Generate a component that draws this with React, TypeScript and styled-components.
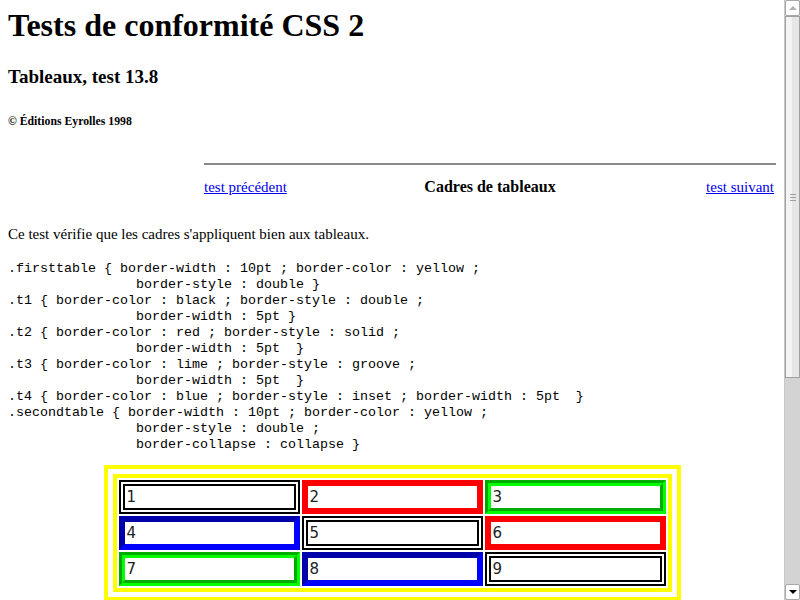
import React from "react";
import styled, { createGlobalStyle } from "styled-components";

const GlobalStyle = createGlobalStyle`
  html, body {
    margin: 0;
    padding: 0;
    overflow: hidden;
    background: #ffffff;
  }
`;

const Screen = styled.div`
  display: flex;
  width: 800px;
  height: 600px;
  overflow: hidden;
`;

const Page = styled.main`
  flex: 1;
  min-width: 0;
  padding: 0 8px;
  overflow: hidden;
  font-family: "Liberation Serif", "Times New Roman", serif;
  color: #000;
`;

const Title = styled.h1`
  margin: 7px 0 0;
  font-size: 32px;
  line-height: 37px;
  font-weight: bold;
`;

const Subtitle = styled.h2`
  margin: 22px 0 0;
  font-size: 19px;
  line-height: 22px;
  font-weight: bold;
`;

const Copyright = styled.p`
  margin: 27px 0 0;
  font-size: 11.75px;
  line-height: 14px;
  font-weight: bold;
`;

const NavBlock = styled.nav`
  width: 572px;
  margin: 34px 0 0 auto;
`;

const Rule = styled.hr`
  margin: 0;
  border: none;
  height: 2px;
  background: #8a8a8a;
`;

const NavRow = styled.div`
  display: grid;
  grid-template-columns: 1fr auto 1fr;
  align-items: baseline;
  margin-top: 13px;
  font-size: 15px;
  line-height: 18px;
`;

const NavLink = styled.a<{ $align: "left" | "right" }>`
  color: #0000ee;
  text-decoration: underline;
  justify-self: ${(p) => (p.$align === "left" ? "start" : "end")};
  margin-right: ${(p) => (p.$align === "right" ? "2px" : "0")};
`;

const NavTitle = styled.strong`
  font-size: 16px;
  font-weight: bold;
`;

const Intro = styled.p`
  margin: 29px 0 0;
  font-size: 15px;
  line-height: 18px;
`;

const Code = styled.pre`
  margin: 18px 0 0;
  font-family: "Liberation Mono", "Courier New", monospace;
  font-size: 13.33px;
  line-height: 16px;
  color: #000;
`;

const TestTable = styled.table`
  width: 577px;
  margin: 12px auto 0;
  table-layout: fixed;
  border-collapse: separate;
  border-spacing: 2px;
  border: 13px double #ffff00;
`;

type Variant = "t1" | "t2" | "t3" | "t4";

const borders: Record<Variant, string> = {
  t1: "6px double #000000",
  t2: "6px solid #ff0000",
  t3: "6px groove #00ff00",
  t4: "6px inset #0000ff",
};

const Cell = styled.td<{ $variant: Variant }>`
  border: ${(p) => borders[p.$variant]};
  padding: 1px 1px 1px 2px;
  font-family: "DejaVu Sans", Verdana, sans-serif;
  font-size: 15px;
  line-height: 20px;
  color: #222;
`;

const Scrollbar = styled.aside`
  width: 16px;
  height: 600px;
  display: flex;
  flex-direction: column;
  background: #d4d4d4;
  border-left: 1px solid #c8c8c8;
  box-sizing: border-box;
`;

const ArrowButton = styled.div<{ $dir: "up" | "down" }>`
  height: 16px;
  flex: none;
  display: flex;
  align-items: center;
  justify-content: center;
  background: #ffffff;
  border: 1px solid #a8a8a8;
  border-radius: 2px;
  box-sizing: border-box;
  &::after {
    content: "";
    width: 0;
    height: 0;
    border-left: 4px solid transparent;
    border-right: 4px solid transparent;
    ${(p) =>
      p.$dir === "up"
        ? "border-bottom: 4px solid #b0b0b0;"
        : "border-top: 4px solid #000000;"}
  }
`;

const Thumb = styled.div`
  height: 362px;
  flex: none;
  display: flex;
  align-items: center;
  justify-content: center;
  background: linear-gradient(90deg, #f4f4f4 0%, #f4f4f4 45%, #e6e6e6 45%, #e6e6e6 100%);
  border: 1px solid #a0a0a0;
  box-sizing: border-box;
`;

const Grip = styled.div`
  width: 6px;
  height: 7px;
  background: repeating-linear-gradient(
    180deg,
    #a0a0a0 0px,
    #a0a0a0 1px,
    transparent 1px,
    transparent 3px
  );
`;

const Track = styled.div`
  flex: 1;
  background: #d3d3d3;
`;

const codeText = `.firsttable { border-width : 10pt ; border-color : yellow ;
                border-style : double }
.t1 { border-color : black ; border-style : double ;
                border-width : 5pt }
.t2 { border-color : red ; border-style : solid ;
                border-width : 5pt  }
.t3 { border-color : lime ; border-style : groove ;
                border-width : 5pt  }
.t4 { border-color : blue ; border-style : inset ; border-width : 5pt  }
.secondtable { border-width : 10pt ; border-color : yellow ;
                border-style : double ;
                border-collapse : collapse }`;

const rows: Variant[][] = [
  ["t1", "t2", "t3"],
  ["t4", "t1", "t2"],
  ["t3", "t4", "t1"],
];

export default function App() {
  return (
    <>
      <GlobalStyle />
      <Screen>
        <Page>
          <Title>Tests de conformité CSS 2</Title>
          <Subtitle>Tableaux, test 13.8</Subtitle>
          <Copyright>© Éditions Eyrolles 1998</Copyright>
          <NavBlock>
            <Rule />
            <NavRow>
              <NavLink $align="left" href="#">
                test précédent
              </NavLink>
              <NavTitle>Cadres de tableaux</NavTitle>
              <NavLink $align="right" href="#">
                test suivant
              </NavLink>
            </NavRow>
          </NavBlock>
          <Intro>Ce test vérifie que les cadres s'appliquent bien aux tableaux.</Intro>
          <Code>{codeText}</Code>
          <TestTable>
            <tbody>
              {rows.map((row, r) => (
                <tr key={r}>
                  {row.map((v, c) => (
                    <Cell key={c} $variant={v}>
                      {r * 3 + c + 1}
                    </Cell>
                  ))}
                </tr>
              ))}
            </tbody>
          </TestTable>
        </Page>
        <Scrollbar>
          <ArrowButton $dir="up" />
          <Thumb>
            <Grip />
          </Thumb>
          <Track />
          <ArrowButton $dir="down" />
        </Scrollbar>
      </Screen>
    </>
  );
}
